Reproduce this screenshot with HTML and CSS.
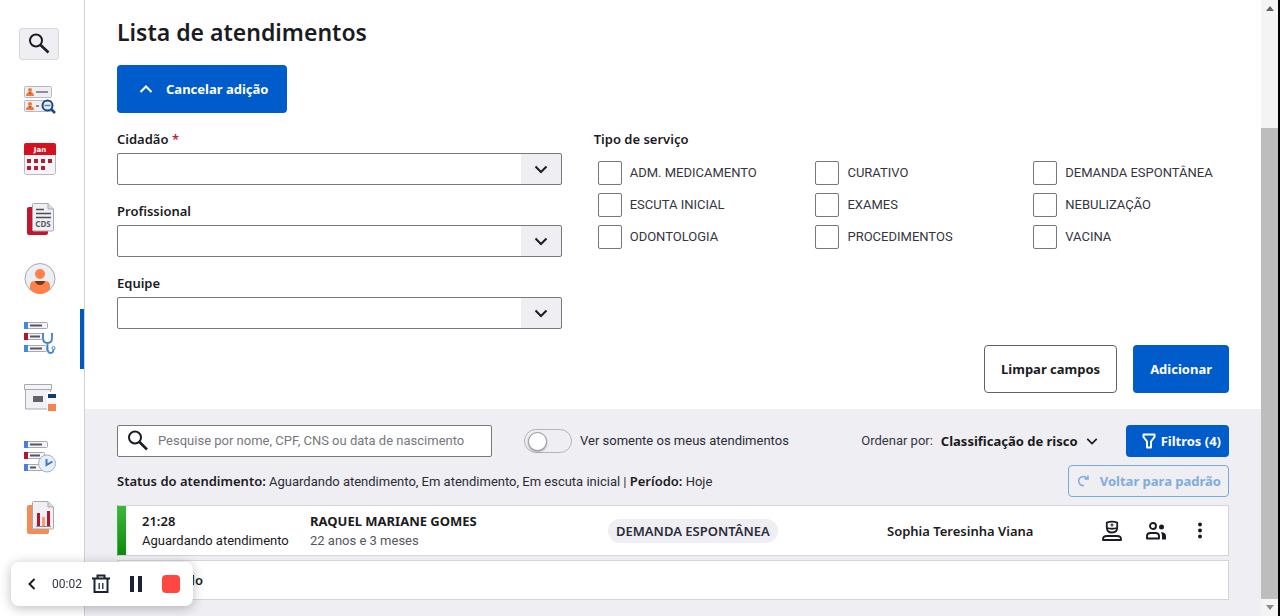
FILE: index.html
```html
<!DOCTYPE html>
<html lang="pt-BR">
<head>
<meta charset="utf-8">
<title>Lista de atendimentos</title>
<link rel="stylesheet" href="styles.css">
</head>
<body>
<div class="app">
  <nav class="sidebar" aria-label="Menu principal">
    <button class="nav-search" aria-label="Buscar">
      <svg width="24" height="24" viewBox="0 0 24 24" fill="none" stroke="#1b1b22" stroke-width="2"><circle cx="9" cy="8.500" r="6"/><path d="M13.500 13l8 7.500" stroke-width="2.600"/></svg>
    </button>
    <a class="nav-item" href="#" aria-label="Cidadãos">
      <svg width="32" height="32" viewBox="0 -1 32 32"><g fill="#eeeef3" stroke="#b9b9c2"><rect x=".5" y="2.500" width="27" height="11" rx="1"/><rect x=".5" y="16.500" width="27" height="11" rx="1"/></g><g fill="#f0783c"><circle cx="6" cy="6" r="2"/><path d="M2 12c0-3 2-4 4-4s4 1 4 4z"/><circle cx="6" cy="20" r="2"/><path d="M2 26c0-3 2-4 4-4s4 1 4 4z"/></g><g fill="#8a3a1c"><path d="M4.500 8.500h3L6 10z"/><path d="M4.500 22.500h3L6 24z"/></g><path d="M12 8h12M12 22h3" stroke="#6f6f7a" stroke-width="1.500"/><circle cx="23.500" cy="21.500" r="5" fill="#e4effb" stroke="#194a86" stroke-width="2"/><path d="M20.500 21.500h6" stroke="#6f7f98" stroke-width="1.500"/><path d="M27 25l4 4" stroke="#194a86" stroke-width="2.500"/></svg>
    </a>
    <a class="nav-item" href="#" aria-label="Agenda">
      <svg width="32" height="32" viewBox="0 0 32 32"><rect x=".5" y=".5" width="31" height="31" rx="2" fill="#f4f4f8" stroke="#b9b9c2"/><path d="M0 12V2q0-2 2-2h28q2 0 2 2v10z" fill="#d3121f"/><text class="cal-text" x="16" y="9" text-anchor="middle">Jan</text><g fill="#ae1f36"><path d="M3 16h4v4H3zM10 16h4v4h-4zM17 16h4v4h-4zM24 16h4v4h-4zM3 23h4v4H3zM10 23h4v4h-4zM17 23h4v4h-4z"/></g></svg>
    </a>
    <a class="nav-item" href="#" aria-label="CDS">
      <svg width="32" height="32" viewBox="0 0 32 32"><rect x="3" y="4" width="21" height="28" rx="2" fill="#c3152d"/><path d="M8.500 1.500q0-1 1-1H24l5.500 5.500v21q0 1-1 1h-19q-1 0-1-1z" fill="#f0f0f4" stroke="#a8a8b2"/><path d="M24 .500V6h5.500" fill="#d9d9e0" stroke="#a8a8b2"/><path d="M12 6.500h8M12 10.500h15M12 14.500h15" stroke="#4c4c56" stroke-width="1.500"/><text class="cds-text" x="19" y="24" text-anchor="middle">CDS</text></svg>
    </a>
    <a class="nav-item" href="#" aria-label="Cidadão">
      <svg width="32" height="32" viewBox="0 0 32 32"><circle cx="16" cy="15.500" r="15" fill="#eeeef5" stroke="#a8a8b2"/><path d="M6 26v-3q0-5 5-5h10q5 0 5 5v3q-4 5-10 5T6 26z" fill="#ff8048"/><path d="M11 18h10q-1 4-5 4t-5-4z" fill="#7c3416"/><circle cx="16" cy="11" r="5" fill="#ff8048"/></svg>
    </a>
    <a class="nav-item active" href="#" aria-label="Lista de atendimentos" aria-current="page">
      <svg width="32" height="32" viewBox="0 1 32 32"><g fill="#f4f4f8" stroke="#a8a8b2"><rect x=".5" y=".5" width="23" height="6" rx="1"/><rect x=".5" y="11.500" width="18" height="6" rx="1"/><rect x=".5" y="23.500" width="22" height="6" rx="1"/></g><path d="M0 0h4v7H0zM0 23h4v7H0z" fill="#4388df"/><path d="M0 11h4v7H0z" fill="#b3152d"/><path d="M6 3.500h12M6 14.500h10M6 26.500h12" stroke="#555560" stroke-width="1.800"/><path d="M20 12h-1v4q0 5 4.500 5t4.500-5v-4h-1M23.500 21v5q0 5 3 5t3-4" fill="none" stroke="#4084c8" stroke-width="1.800"/><circle cx="29.500" cy="26" r="1.500" fill="#fff" stroke="#4084c8"/></svg>
    </a>
    <a class="nav-item" href="#" aria-label="Estoque">
      <svg width="32" height="32" viewBox="0 -1 32 32"><path d="M1.500 5h25v20h-25z" fill="#f0f0f5" stroke="#a8a8b2"/><path d="M.500 .500h27v5H.500z" fill="#f4f4f8" stroke="#a8a8b2"/><path d="M9 12h10v6H9z" fill="#62626c"/><path d="M23 8h9v20h-9z" fill="#fff"/><path d="M24 10h8v4h-8z" fill="#103d70"/><path d="M24 14h8v6h-8z" fill="#f7f7fb"/><path d="M24 20h8v7h-8z" fill="#f78450"/></svg>
    </a>
    <a class="nav-item" href="#" aria-label="Histórico">
      <svg width="32" height="32" viewBox="0 2 32 32"><g fill="#f4f4f8" stroke="#a8a8b2"><rect x=".5" y=".5" width="23" height="6" rx="1"/><rect x=".5" y="11.500" width="20" height="6" rx="1"/><rect x=".5" y="23.500" width="18" height="6" rx="1"/></g><path d="M0 0h4v7H0zM0 23h4v7H0z" fill="#4a7fdb"/><path d="M0 11h4v7H0z" fill="#b3152d"/><path d="M6 3.500h12M6 14.500h10M6 26.500h6" stroke="#555560" stroke-width="1.800"/><circle cx="23" cy="22.500" r="8.500" fill="#e9eff8" stroke="#a8aebb"/><path d="M22.500 18v6l6-3.500" fill="none" stroke="#3f79d6" stroke-width="2"/></svg>
    </a>
    <a class="nav-item" href="#" aria-label="Relatórios">
      <svg width="32" height="32" viewBox="0 1 32 32"><rect x="3" y="3" width="22" height="29" rx="2" fill="#f58a55"/><path d="M8.500 .500q0-1 1-1H24l5.500 5.500v21q0 1-1 1h-19q-1 0-1-1z" fill="#f0f0f4" stroke="#a8a8b2"/><path d="M24 0v5h5.500" fill="#d9d9e0" stroke="#a8a8b2"/><path d="M13 11h3v13h-3zM23 9h3v15h-3z" fill="#ad182f"/><path d="M18 15h3v9h-3z" fill="#f4a06c"/><path d="M12 24.500h15" stroke="#8a8a94"/></svg>
    </a>
  </nav>

  <main class="main">
    <section class="form-section">
      <h1 class="title">Lista de atendimentos</h1>
      <button class="btn primary cancel">
        <svg width="14" height="14" viewBox="0 0 14 14" fill="none" stroke="currentColor" stroke-width="2"><path d="M1.500 10L7 4.500l5.500 5.500"/></svg>
        Cancelar adição
      </button>
      <form class="form">
        <div class="fields">
          <div class="field">
            <label class="label" for="cidadao">Cidadão <span class="required">*</span></label>
            <div class="select-box"><select class="select" id="cidadao"></select><svg class="chevron" width="14" height="14" viewBox="0 0 14 14"><path d="M1.500 4.500L7 10l5.500-5.500"/></svg></div>
          </div>
          <div class="field">
            <label class="label" for="profissional">Profissional</label>
            <div class="select-box"><select class="select" id="profissional"></select><svg class="chevron" width="14" height="14" viewBox="0 0 14 14"><path d="M1.500 4.500L7 10l5.500-5.500"/></svg></div>
          </div>
          <div class="field">
            <label class="label" for="equipe">Equipe</label>
            <div class="select-box"><select class="select" id="equipe"></select><svg class="chevron" width="14" height="14" viewBox="0 0 14 14"><path d="M1.500 4.500L7 10l5.500-5.500"/></svg></div>
          </div>
        </div>
        <fieldset class="services">
          <legend class="label">Tipo de serviço</legend>
          <div class="service-grid">
            <label class="check"><input type="checkbox">ADM. MEDICAMENTO</label>
            <label class="check"><input type="checkbox">CURATIVO</label>
            <label class="check"><input type="checkbox">DEMANDA ESPONTÂNEA</label>
            <label class="check"><input type="checkbox">ESCUTA INICIAL</label>
            <label class="check"><input type="checkbox">EXAMES</label>
            <label class="check"><input type="checkbox">NEBULIZAÇÃO</label>
            <label class="check"><input type="checkbox">ODONTOLOGIA</label>
            <label class="check"><input type="checkbox">PROCEDIMENTOS</label>
            <label class="check"><input type="checkbox">VACINA</label>
          </div>
        </fieldset>
      </form>
      <div class="actions">
        <button class="btn outline">Limpar campos</button>
        <button class="btn primary">Adicionar</button>
      </div>
    </section>

    <section class="list-section">
      <div class="toolbar">
        <label class="search">
          <svg width="24" height="24" viewBox="0 0 24 24" fill="none" stroke="#1b1b22" stroke-width="2"><circle cx="9" cy="8.500" r="6"/><path d="M13.500 13l7.500 7.500" stroke-width="2.500"/></svg>
          <input class="search-input" type="text" aria-label="Pesquisar" placeholder="Pesquise por nome, CPF, CNS ou data de nascimento">
        </label>
        <label class="toggle"><input type="checkbox" role="switch">Ver somente os meus atendimentos</label>
        <div class="order">
          <span>Ordenar por:</span>
          <button class="order-btn">Classificação de risco
            <svg class="chevron-sm" width="12" height="12" viewBox="0 0 14 14"><path d="M1.500 4.500L7 10l5.500-5.500"/></svg>
          </button>
        </div>
        <button class="btn primary small filters">
          <svg width="14" height="16" viewBox="0 0 14 16" fill="none" stroke="currentColor" stroke-width="2" stroke-linejoin="round"><path d="M1.500 1.500h11v2.500L9 8.500v6H5v-6L1.500 4z"/></svg>
          Filtros (4)
        </button>
      </div>
      <div class="status-row">
        <p class="status"><b>Status do atendimento:</b> Aguardando atendimento, Em atendimento, Em escuta inicial | <b>Período:</b> Hoje</p>
        <button class="btn ghost small">
          <svg width="14" height="14" viewBox="0 0 14 14" fill="none" stroke="currentColor" stroke-width="1.500"><path d="M8 11.500A4.500 4.500 0 1 1 11 4.500M12 1.500V5H8.500"/></svg>
          Voltar para padrão
        </button>
      </div>
      <div class="cards">
        <article class="card entry">
          <div class="cell-time"><b>21:28</b><span>Aguardando atendimento</span></div>
          <div class="cell-person"><b class="name">RAQUEL MARIANE GOMES</b><span class="muted">22 anos e 3 meses</span></div>
          <div class="cell-tag"><span class="tag">DEMANDA ESPONTÂNEA</span></div>
          <b class="cell-pro">Sophia Teresinha Viana</b>
          <div class="cell-actions">
            <button class="icon-btn" aria-label="Atender"><svg width="20" height="20" viewBox="0 0 20 20" fill="none" stroke="#1b1b22" stroke-width="1.800" stroke-linejoin="round"><path d="M4.800 1.500Q10-.2 15.200 1.500V6.500Q15.200 11.500 10 11.500T4.800 6.500zM5 7q5 1.500 10 0M1 19v-1q0-3 4-3h10q4 0 4 3v1z"/><path d="M10 2.500v3M8.500 4h3" stroke-width="1.200"/></svg></button>
            <button class="icon-btn" aria-label="Escuta inicial"><svg width="20" height="20" viewBox="0 0 20 20" fill="none" stroke="#1b1b22" stroke-width="1.900" stroke-linejoin="round"><circle cx="7" cy="5" r="3"/><path d="M1 17.500V15q0-3 3.500-3h5q3.500 0 3.500 3v2.500z"/><circle cx="15.500" cy="6" r="2.500" fill="#1b1b22" stroke="none"/><path d="M15 11q5 .5 5 4v3.500h-4V15q0-2-1-4z" fill="#1b1b22" stroke="none"/></svg></button>
            <button class="icon-btn" aria-label="Mais opções"><svg width="20" height="20" viewBox="0 0 20 20" fill="#1b1b22"><circle cx="10" cy="3.500" r="2"/><circle cx="10" cy="9.500" r="2"/><circle cx="10" cy="15.500" r="2"/></svg></button>
          </div>
        </article>
        <article class="card compact"><b>Realizado</b></article>
      </div>
    </section>
  </main>

  <div class="scrollbar" aria-hidden="true">
    <span class="arrow up"></span>
    <div class="track"><div class="thumb"></div></div>
    <span class="arrow down"></span>
  </div>
</div>

<div class="recorder">
  <button class="icon-btn" aria-label="Recolher"><svg width="10" height="12" viewBox="0 0 10 12" fill="none" stroke="#1b1b22" stroke-width="2"><path d="M7.500 1L2.500 6l5 5"/></svg></button>
  <span class="timer">00:02</span>
  <button class="icon-btn" aria-label="Descartar"><svg width="18" height="20" viewBox="0 0 18 20" fill="none" stroke="#1b2430" stroke-width="2"><path d="M0 4.500h18M5.500 4V1.500h7V4M2.500 5v13h13V5"/><path d="M7.200 9v6M10.800 9v6" stroke-width="1.300"/></svg></button>
  <button class="icon-btn" aria-label="Pausar"><svg width="14" height="16" viewBox="0 0 14 16" fill="#1b2430"><path d="M1 0h4v16H1zM9 0h4v16H9z"/></svg></button>
  <button class="stop" aria-label="Parar"></button>
</div>
</body>
</html>
```
FILE: styles.css
```css
* { box-sizing: border-box; }

body {
  margin: 0;
  background: #fff;
  color: #1b1b22;
  font: 13px/20px Roboto, "Noto Sans", sans-serif;
}

button, input, select { font: inherit; color: inherit; }
button { cursor: pointer; }
svg { display: block; flex: none; overflow: visible; }
b, .title, .label, .tag, .btn, .order-btn { font-family: "Noto Sans", sans-serif; }
b { font-weight: 600; }

.app {
  display: flex;
  height: 100vh;
  overflow: hidden;
  border-right: 2px solid #000;
}

/* Sidebar */
.sidebar {
  flex: 0 0 85px;
  display: flex;
  flex-direction: column;
  padding-top: 28px;
  border-right: 1px solid #d0d0d6;
}
.nav-search {
  display: flex;
  align-items: center;
  justify-content: center;
  width: 40px;
  height: 32px;
  margin: 0 0 9px 19px;
  padding: 0;
  background: #eeeef3;
  border: 1px solid #d6d6de;
  border-radius: 3px;
}
.nav-item {
  display: flex;
  flex: 0 0 60px;
  align-items: center;
  padding-left: 24px;
}
.nav-item.active { border-right: 4px solid #0059bd; }
.cal-text { font: bold 7px "DejaVu Sans", sans-serif; fill: #fff; }
.cds-text { font: bold 8px "Noto Sans", sans-serif; fill: #5a5a64; }

/* Main column */
.main {
  flex: 1;
  min-width: 0;
  display: flex;
  flex-direction: column;
}
.form-section { padding: 16px 32px; }
.title {
  margin: 0 0 17px;
  font-size: 23px;
  font-weight: 600;
  line-height: 32px;
}

.btn {
  display: inline-flex;
  align-items: center;
  justify-content: center;
  height: 48px;
  padding: 0 16px;
  border: 1px solid transparent;
  border-radius: 4px;
  font-weight: 700;
  white-space: nowrap;
}
.btn.primary { background: #005bcb; color: #fff; }
.btn.outline { background: #fff; border-color: #62626c; }
.btn.ghost { background: transparent; border-color: #78a9dd; color: #80acdd; }
.btn.small { height: 32px; padding: 0 7px; }
.btn.cancel { gap: 13px; padding: 0 18px 0 21px; }

.form {
  display: grid;
  grid-template-columns: 7fr 10fr;
  gap: 32px;
  margin-top: 16px;
}
.fields { display: grid; gap: 16px; }
.label {
  display: block;
  margin-bottom: 4px;
  padding: 0;
  font-weight: 600;
}
.required { color: #c02030; }
.select-box {
  display: flex;
  height: 32px;
  border: 1px solid #777780;
  border-radius: 2px;
  background: linear-gradient(to left, #eeeef3 40px, #fff 40px);
  align-items: center;
}
.select {
  appearance: none;
  flex: 1;
  height: 100%;
  margin-right: -27px;
  border: 0;
  background: transparent;
}
.chevron { margin-right: 13px; pointer-events: none; }
.chevron, .chevron-sm { fill: none; stroke: #1b1b22; stroke-width: 2; }

.services { min-width: 0; margin: 0; padding: 0; border: 0; }
.service-grid {
  display: grid;
  grid-template-columns: repeat(3, 1fr);
  gap: 8px 22px;
  padding: 8px 0 0 4px;
}
.check {
  display: flex;
  align-items: center;
  gap: 8px;
  color: #35353f;
  white-space: nowrap;
}
.check input {
  appearance: none;
  width: 24px;
  height: 24px;
  margin: 0;
  border: 1px solid #777780;
  border-radius: 2px;
  background: #fff;
}
.actions {
  display: flex;
  justify-content: flex-end;
  gap: 16px;
  margin-top: 16px;
}

/* List */
.list-section {
  flex: 1;
  padding: 16px 32px;
  background: #eeeef3;
}
.toolbar, .status-row { display: flex; align-items: center; }
.search {
  display: flex;
  align-items: center;
  flex: 0 1 375px;
  gap: 8px;
  height: 32px;
  padding: 0 8px;
  background: #fff;
  border: 1px solid #777780;
  border-radius: 2px;
}
.search-input {
  flex: 1;
  min-width: 0;
  padding: 0;
  border: 0;
  outline: 0;
  background: transparent;
}
.search-input::placeholder { color: #777780; opacity: 1; }
.toggle {
  display: flex;
  align-items: center;
  gap: 8px;
  margin-left: 32px;
  white-space: nowrap;
  color: #2b2b35;
}
.toggle input {
  appearance: none;
  display: flex;
  align-items: center;
  width: 48px;
  height: 24px;
  margin: 0;
  padding: 0 3px;
  border: 1px solid #b4b4bd;
  border-radius: 12px;
}
.toggle input::before {
  content: "";
  width: 17px;
  height: 17px;
  border: 1px solid #9a9aa4;
  border-radius: 50%;
  background: #fff;
  box-shadow: 0 1px 2px #0005;
}
.order {
  display: flex;
  gap: 8px;
  margin-left: auto;
  white-space: nowrap;
  color: #35353f;
}
.order-btn {
  display: flex;
  align-items: center;
  gap: 8px;
  padding: 0;
  border: 0;
  background: none;
  color: #1b1b22;
  font-weight: 700;
}
.btn.filters { gap: 5px; margin-left: 28px; padding-left: 15px; }
.status-row { justify-content: space-between; margin-top: 8px; }
.status { margin: 0; color: #2b2b35; }
.status b { color: #1b1b22; }
.ghost { gap: 10px; }

.cards { display: grid; gap: 4px; margin-top: 8px; }
.card {
  display: flex;
  align-items: center;
  height: 51px;
  border: 1px solid #d3d3da;
  background: #fff;
}
.entry {
  display: grid;
  grid-template-columns: 8px 184px 298px 1fr 215px 126px;
  border-left-color: #3cb83a;
}
.entry::before {
  content: "";
  align-self: stretch;
  background: linear-gradient(#3cb83a, #10880f);
}
.compact { height: 40px; padding-left: 24px; }
.cell-time, .cell-person { display: grid; white-space: nowrap; }
.cell-time { padding-left: 16px; }
.name { font-weight: 700; }
.muted { color: #55555f; }
.tag {
  display: inline-block;
  padding: 2px 8px;
  border-radius: 12px;
  background: #eeeef3;
  color: #2c2c38;
  font-weight: 600;
  white-space: nowrap;
}
.cell-pro { white-space: nowrap; }
.cell-actions { display: flex; gap: 24px; }
.icon-btn { padding: 0; border: 0; background: none; }

/* Page scrollbar */
.scrollbar {
  flex: 0 0 17px;
  display: flex;
  flex-direction: column;
  align-items: center;
  background: #f4f4f5;
}
.arrow {
  flex: 0 0 17px;
  width: 8px;
  display: flex;
  align-items: center;
}
.arrow::before {
  content: "";
  border: 4px solid transparent;
}
.arrow.up::before { border-top: 0; border-bottom: 5px solid #62626a; }
.arrow.down::before { border-bottom: 0; border-top: 5px solid #8a8a92; }
.track {
  flex: 1;
  width: 100%;
  display: flex;
  flex-direction: column;
  justify-content: flex-end;
}
.thumb { height: 81%; background: #bdbdbd; }

/* Screen recorder */
.recorder {
  position: fixed;
  left: 11px;
  bottom: 10px;
  display: flex;
  align-items: center;
  height: 44px;
  padding: 0 13px 0 16px;
  border-radius: 8px;
  background: #fff;
  box-shadow: 0 2px 12px #0004;
}
.timer {
  margin: 0 10px 0 15px;
  font-size: 12px;
  color: #35353f;
}
.recorder .icon-btn + .icon-btn { margin: 0 19px; }
.stop {
  width: 18px;
  height: 18px;
  padding: 0;
  border: 0;
  border-radius: 4px;
  background: #ff4742;
}
```
